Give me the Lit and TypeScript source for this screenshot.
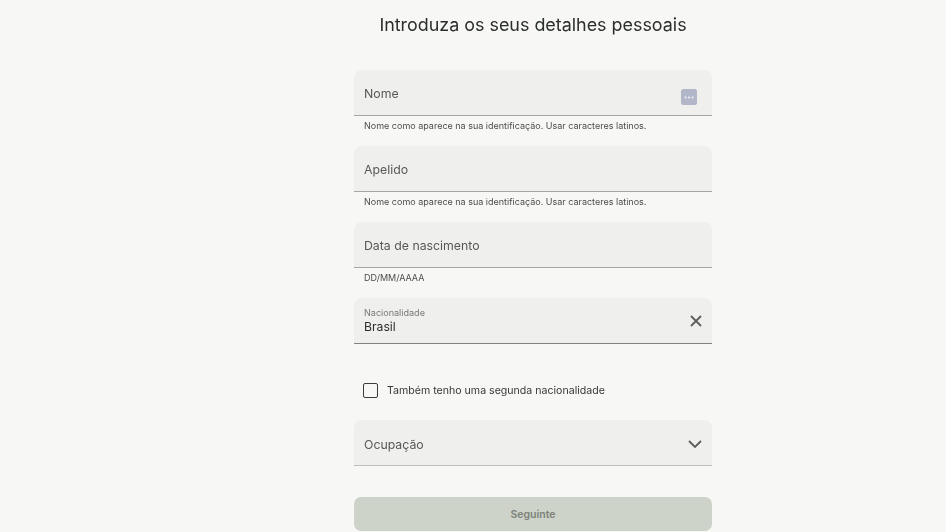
import { LitElement, html, css } from "lit";
import { customElement } from "lit/decorators.js";

@customElement("app-root")
export class AppRoot extends LitElement {
  static styles = css`
    :host { display: block; height: 532px; overflow: hidden; background: #f7f7f5; font-family: Inter, "Liberation Sans", sans-serif; color: #2b2f2c; }
    .col { width: 358px; margin-left: 354px; display: flex; flex-direction: column; filter: blur(0.35px); }
    h1 { margin: 0; height: 70px; box-sizing: border-box; padding-top: 13px; font-size: 17.9px; line-height: 24px; font-weight: 400; text-align: center; width: 358px; }
    .field { height: 46px; box-sizing: border-box; background: #efefed; border-radius: 8px 8px 0 0; border-bottom: 1.5px solid #a3a6a3; padding: 2px 10px 0; display: flex; align-items: center; justify-content: space-between; font-size: 12.3px; color: #555956; }
    .field.strong { border-bottom-color: #7f837f; padding-top: 0; }
    .field.light { border-bottom-color: #bcbfbc; padding-top: 3px; }
    .hint { height: 30px; box-sizing: border-box; padding: 3px 10px 0; font-size: 9px; line-height: 13px; color: #4a4e4b; }
    .stack { display: flex; flex-direction: column; }
    .small { font-size: 9.05px; line-height: 12px; color: #767a77; margin-top: -1px; }
    .val { font-size: 12.2px; line-height: 15px; color: #2b2f2c; margin-bottom: -1px; }
    .check { display: flex; align-items: center; gap: 9px; padding: 39px 9px 22px; font-size: 10.6px; line-height: 14px; color: #353936; }
    .box { width: 13px; height: 13px; border: 1.8px solid #3a3e3b; border-radius: 2px; }
    .btn { margin-top: 31px; height: 34px; background: #cdd3c9; border-radius: 7px; display: flex; align-items: center; justify-content: center; font-size: 10.5px; font-weight: 600; color: #7c8279; }
    .key { margin: 7px 5px 0 0; }
    svg { display: block; }
  `;
  render() {
    return html`<div class="col">
      <h1>Introduza os seus detalhes pessoais</h1>
      <div class="field"><span>Nome</span>
        <svg class="key" width="16" height="16" viewBox="0 0 16 16"><rect width="16" height="16" rx="2.5" fill="#b1b6c9"/><circle cx="4.5" cy="8.5" r="1" fill="#f4f4f7"/><circle cx="8" cy="8.5" r="1" fill="#f4f4f7"/><circle cx="11.5" cy="8.5" r="1" fill="#f4f4f7"/></svg></div>
      <div class="hint">Nome como aparece na sua identificação. Usar caracteres latinos.</div>
      <div class="field"><span>Apelido</span></div>
      <div class="hint">Nome como aparece na sua identificação. Usar caracteres latinos.</div>
      <div class="field"><span>Data de nascimento</span></div>
      <div class="hint">DD/MM/AAAA</div>
      <div class="field strong"><div class="stack"><span class="small">Nacionalidade</span><span class="val">Brasil</span></div>
        <svg width="12" height="12" viewBox="0 0 12 12"><path d="M1 1L11 11M11 1L1 11" stroke="#5a5e5b" stroke-width="1.8"/></svg></div>
      <div class="check"><div class="box"></div><span>Também tenho uma segunda nacionalidade</span></div>
      <div class="field light"><span>Ocupação</span>
        <svg width="14" height="8" viewBox="0 0 14 8"><path d="M1 1L7 7L13 1" fill="none" stroke="#5a5e5b" stroke-width="1.8"/></svg></div>
      <div class="btn">Seguinte</div>
    </div>`;
  }
}
